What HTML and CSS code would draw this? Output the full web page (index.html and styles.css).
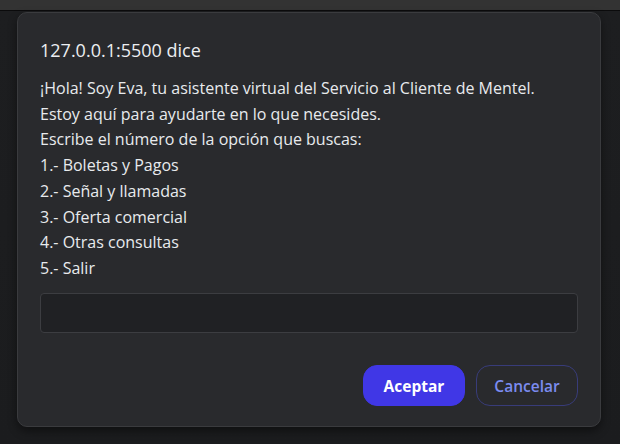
FILE: index.html
```html
<!DOCTYPE html>
<html lang="es">
<head>
<meta charset="utf-8">
<title>127.0.0.1:5500 dice</title>
<link rel="stylesheet" href="styles.css">
</head>
<body>
<div class="topbar"></div>
<div class="page">
  <div class="dialog">
    <div class="title">127.0.0.1:5500 dice</div>
    <div class="message">
      <div>¡Hola! Soy Eva, tu asistente virtual del Servicio al Cliente de Mentel.</div>
      <div>Estoy aquí para ayudarte en lo que necesides.</div>
      <div>Escribe el número de la opción que buscas:</div>
      <div>1.- Boletas y Pagos</div>
      <div>2.- Señal y llamadas</div>
      <div>3.- Oferta comercial</div>
      <div>4.- Otras consultas</div>
      <div>5.- Salir</div>
    </div>
    <input class="field" type="text">
    <div class="actions">
      <button class="btn primary">Aceptar</button>
      <button class="btn secondary">Cancelar</button>
    </div>
  </div>
</div>
</body>
</html>
```
FILE: styles.css
```css
html, body {
  margin: 0;
  padding: 0;
  height: 100%;
}
body {
  background: #18191b;
  font-family: "Open Sans", "Noto Sans", sans-serif;
  color: #e8eaed;
  overflow: hidden;
}
.topbar {
  height: 10px;
  background: #333333;
  border-bottom: 1px solid #0b0b0c;
}
.page {
  background: linear-gradient(#1d1e20, #1b1c1e);
  height: 433px;
  padding-top: 1px;
  box-sizing: border-box;
}
.dialog {
  margin-left: 17px;
  width: 584px;
  height: 415px;
  box-sizing: border-box;
  background: #292a2d;
  border: 1px solid #3a3b3e;
  border-radius: 10px;
  box-shadow: 0 4px 10px rgba(0, 0, 0, 0.45);
  padding: 25px 22px 20px 22px;
  display: flex;
  flex-direction: column;
}
.title {
  font-size: 18px;
  line-height: 24px;
  color: #eceef1;
}
.message {
  margin-top: 14px;
  font-size: 16px;
  line-height: 25.7px;
  color: #e8eaed;
}
.field {
  margin-top: 11px;
  height: 40px;
  box-sizing: border-box;
  background: #202124;
  border: 1px solid #3c3d41;
  border-radius: 4px;
  outline: none;
  width: 100%;
}
.actions {
  margin-top: auto;
  display: flex;
  justify-content: flex-end;
  gap: 11px;
}
.btn {
  width: 102px;
  height: 41px;
  border-radius: 14px;
  font-family: "Open Sans", "Noto Sans", sans-serif;
  font-size: 15.5px;
  box-sizing: border-box;
  cursor: pointer;
}
.primary {
  background: #4037e6;
  border: 1px solid #4037e6;
  color: #ffffff;
  font-weight: 700;
}
.secondary {
  background: transparent;
  border: 1px solid #383c7a;
  color: #7b8cf0;
  font-weight: 600;
}
```
